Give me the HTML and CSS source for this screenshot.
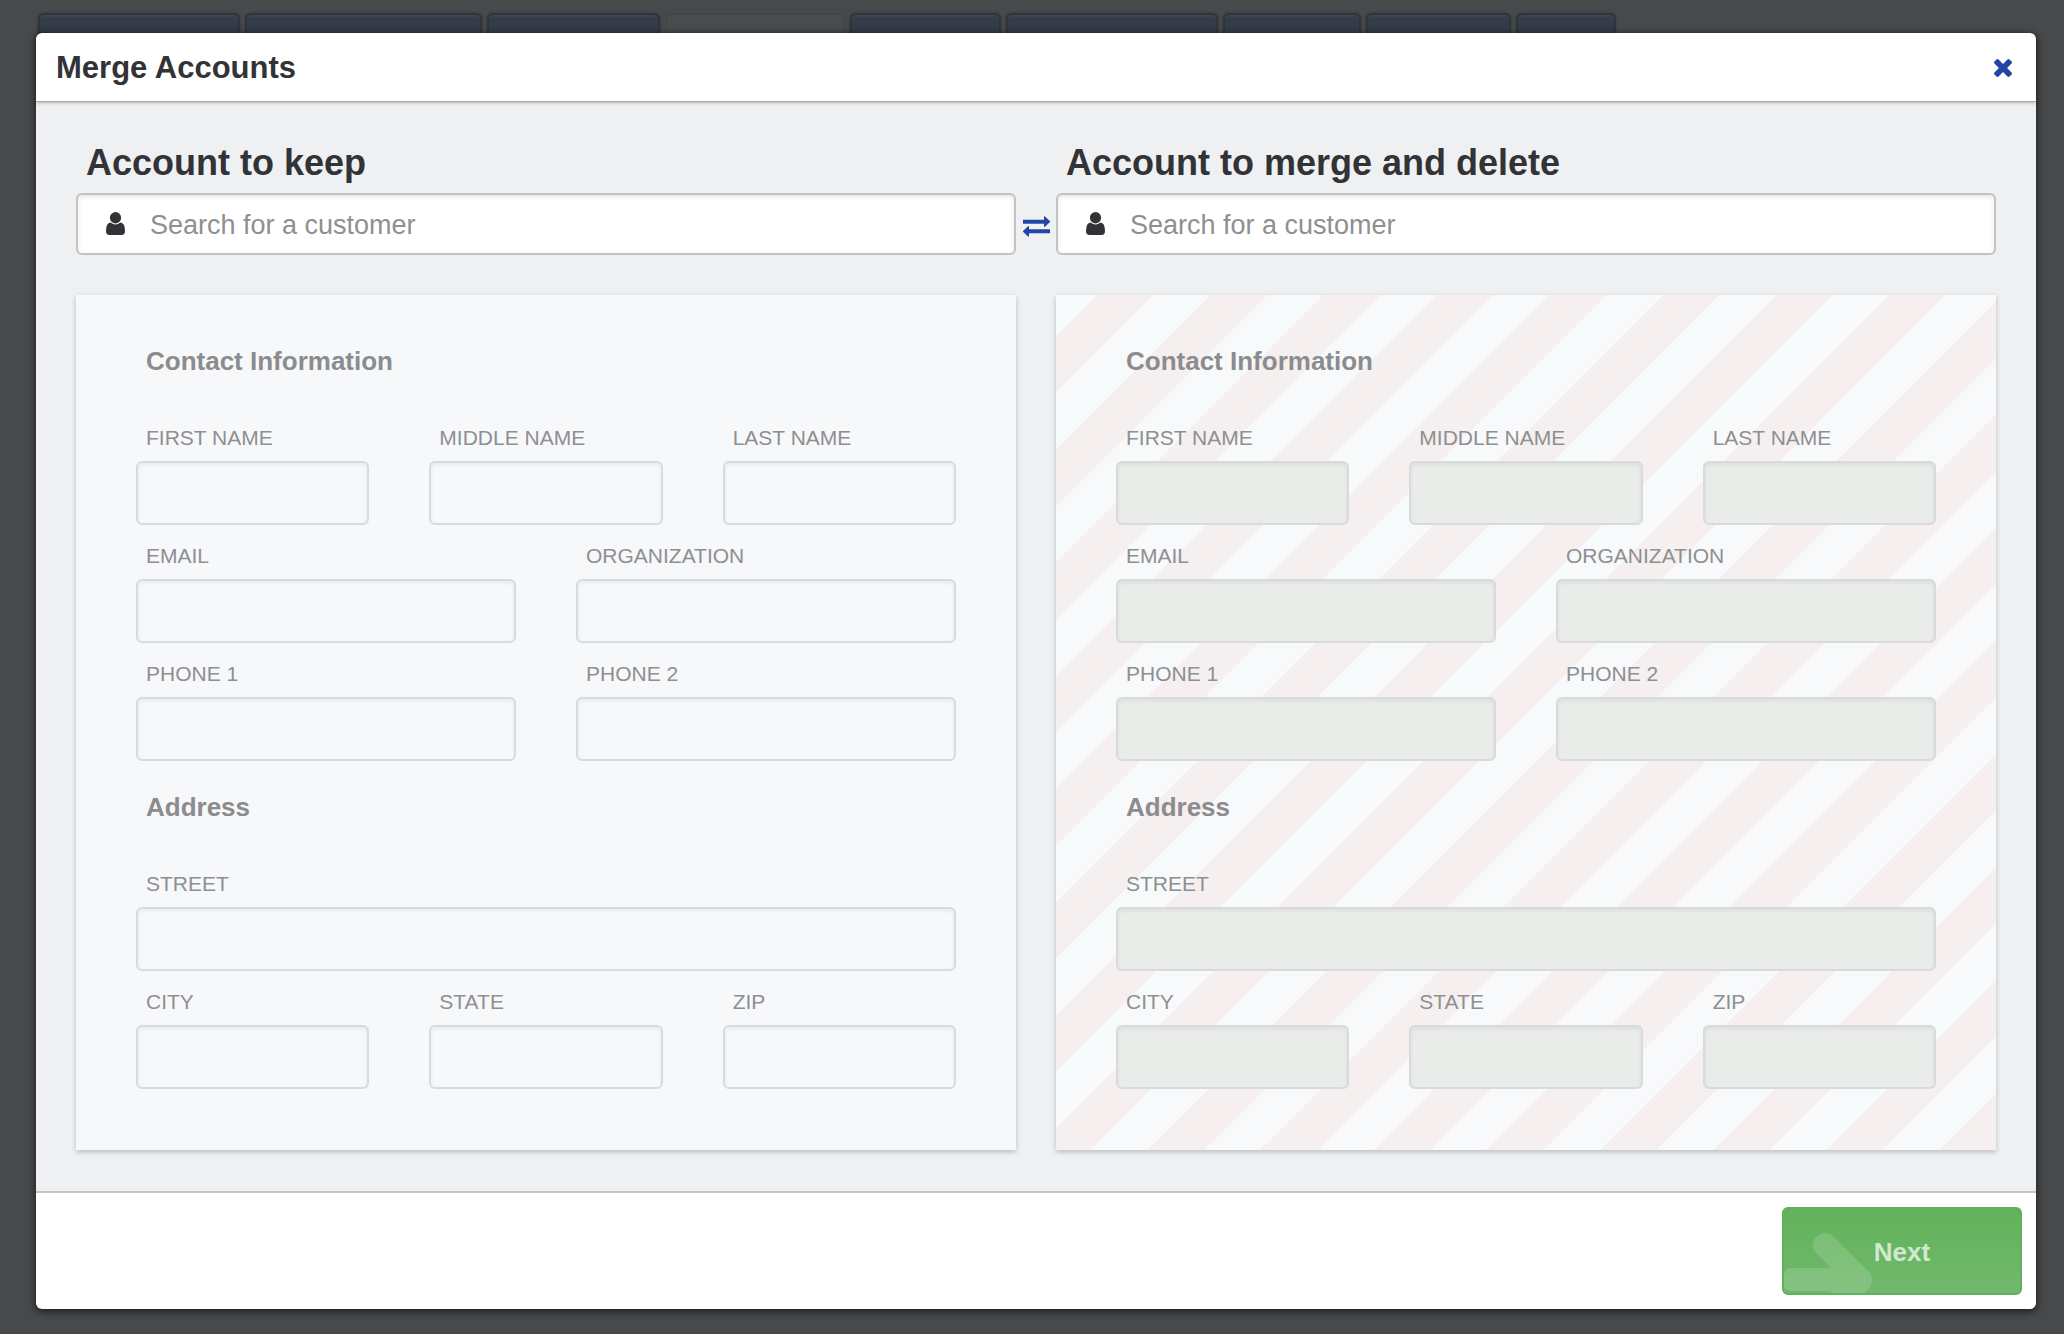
FILE: index.html
```html
<!DOCTYPE html>
<html lang="en">
<head>
<meta charset="utf-8">
<meta name="viewport" content="width=device-width, initial-scale=1">
<title>Merge Accounts</title>
<link rel="stylesheet" href="styles.css">
</head>
<body>
<div class="page-tabs" aria-hidden="true">
  <span class="page-tab"></span>
  <span class="page-tab"></span>
  <span class="page-tab"></span>
  <span class="page-tab page-tab-active"></span>
  <span class="page-tab"></span>
  <span class="page-tab"></span>
  <span class="page-tab"></span>
  <span class="page-tab"></span>
  <span class="page-tab"></span>
</div>

<div class="overlay">
  <div class="dialog" role="dialog" aria-modal="true" aria-labelledby="dialog-title">
    <header class="dialog-header">
      <h1 class="dialog-title" id="dialog-title">Merge Accounts</h1>
      <button class="icon-button" type="button" aria-label="Close">
        <svg width="18" height="18" viewBox="302 366 1188 1188" fill="currentColor"><path d="M1490 1322q0 40-28 68l-136 136q-28 28-68 28t-68-28l-294-294-294 294q-28 28-68 28t-68-28l-136-136q-28-28-28-68t28-68l294-294-294-294q-28-28-28-68t28-68l136-136q28-28 68-28t68 28l294 294 294-294q28-28 68-28t68 28l136 136q28 28 28 68t-28 68l-294 294 294 294q28 28 28 68z"/></svg>
      </button>
    </header>

    <form class="dialog-body" id="merge-form">
      <section class="account">
        <h2 class="account-title"><label for="keep-search">Account to keep</label></h2>
        <div class="search">
          <svg width="19" height="25" viewBox="0 0 19 25" fill="currentColor"><ellipse cx="9.5" cy="5.7" rx="5.6" ry="5.7"/><path d="M4.6 10.6Q9.5 14.6 14.4 10.6Q19 11 19 19Q19 23 15.5 23H3.5Q0 23 0 19Q0 11 4.6 10.6Z"/></svg>
          <input class="search-input" id="keep-search" type="text" placeholder="Search for a customer">
        </div>
        <div class="card">
          <h3 class="card-heading">Contact Information</h3>
          <div class="row">
            <div class="field"><label for="keep-first">FIRST NAME</label><input id="keep-first" type="text"></div>
            <div class="field"><label for="keep-middle">MIDDLE NAME</label><input id="keep-middle" type="text"></div>
            <div class="field"><label for="keep-last">LAST NAME</label><input id="keep-last" type="text"></div>
          </div>
          <div class="row">
            <div class="field"><label for="keep-email">EMAIL</label><input id="keep-email" type="text"></div>
            <div class="field"><label for="keep-org">ORGANIZATION</label><input id="keep-org" type="text"></div>
          </div>
          <div class="row">
            <div class="field"><label for="keep-phone1">PHONE 1</label><input id="keep-phone1" type="text"></div>
            <div class="field"><label for="keep-phone2">PHONE 2</label><input id="keep-phone2" type="text"></div>
          </div>
          <h3 class="card-heading">Address</h3>
          <div class="row">
            <div class="field"><label for="keep-street">STREET</label><input id="keep-street" type="text"></div>
          </div>
          <div class="row">
            <div class="field"><label for="keep-city">CITY</label><input id="keep-city" type="text"></div>
            <div class="field"><label for="keep-state">STATE</label><input id="keep-state" type="text"></div>
            <div class="field"><label for="keep-zip">ZIP</label><input id="keep-zip" type="text"></div>
          </div>
        </div>
      </section>

      <button class="icon-button swap-button" type="button" aria-label="Swap accounts">
        <svg width="27" height="21" viewBox="0 0 27 21" fill="currentColor"><path d="M0 3.7H21V0.8Q21.2 0 22 0.5L27 5.2V6L22 10.7Q21.2 11.2 21 10.4V7.8H0ZM27 13.2H6V10.6Q5.8 9.8 5 10.3L0 15V15.8L5 20.5Q5.8 21 6 20.2V17.3H27Z"/></svg>
      </button>

      <section class="account">
        <h2 class="account-title"><label for="delete-search">Account to merge and delete</label></h2>
        <div class="search">
          <svg width="19" height="25" viewBox="0 0 19 25" fill="currentColor"><ellipse cx="9.5" cy="5.7" rx="5.6" ry="5.7"/><path d="M4.6 10.6Q9.5 14.6 14.4 10.6Q19 11 19 19Q19 23 15.5 23H3.5Q0 23 0 19Q0 11 4.6 10.6Z"/></svg>
          <input class="search-input" id="delete-search" type="text" placeholder="Search for a customer">
        </div>
        <div class="card card-delete">
          <h3 class="card-heading">Contact Information</h3>
          <div class="row">
            <div class="field"><label for="delete-first">FIRST NAME</label><input id="delete-first" type="text" disabled></div>
            <div class="field"><label for="delete-middle">MIDDLE NAME</label><input id="delete-middle" type="text" disabled></div>
            <div class="field"><label for="delete-last">LAST NAME</label><input id="delete-last" type="text" disabled></div>
          </div>
          <div class="row">
            <div class="field"><label for="delete-email">EMAIL</label><input id="delete-email" type="text" disabled></div>
            <div class="field"><label for="delete-org">ORGANIZATION</label><input id="delete-org" type="text" disabled></div>
          </div>
          <div class="row">
            <div class="field"><label for="delete-phone1">PHONE 1</label><input id="delete-phone1" type="text" disabled></div>
            <div class="field"><label for="delete-phone2">PHONE 2</label><input id="delete-phone2" type="text" disabled></div>
          </div>
          <h3 class="card-heading">Address</h3>
          <div class="row">
            <div class="field"><label for="delete-street">STREET</label><input id="delete-street" type="text" disabled></div>
          </div>
          <div class="row">
            <div class="field"><label for="delete-city">CITY</label><input id="delete-city" type="text" disabled></div>
            <div class="field"><label for="delete-state">STATE</label><input id="delete-state" type="text" disabled></div>
            <div class="field"><label for="delete-zip">ZIP</label><input id="delete-zip" type="text" disabled></div>
          </div>
        </div>
      </section>
    </form>

    <footer class="dialog-footer">
      <button class="next-button" type="submit" form="merge-form">
        <svg class="next-arrow" width="90" height="84" viewBox="0 0 90 84" aria-hidden="true"><g opacity="0.14"><path d="M41 36L76 71L41 106" fill="none" stroke="#fff" stroke-width="24" stroke-linecap="round" stroke-linejoin="round"/><rect x="0" y="59" width="72" height="23" rx="7" fill="#fff"/></g></svg>
        Next
      </button>
    </footer>
  </div>
</div>
</body>
</html>
```
FILE: styles.css
```css
* {
  box-sizing: border-box;
}

body {
  margin: 0;
  min-height: 100vh;
  background: #48494b;
  color: #323336;
  font-family: "Liberation Sans", Arial, Helvetica, sans-serif;
}

h1,
h2,
h3 {
  margin: 0;
  font-weight: bold;
}

button,
input {
  font-family: inherit;
}

svg {
  display: block;
  flex: none;
}

/* Tab strip of the page behind the dialog */
.page-tabs {
  display: grid;
  grid-template-columns: 202px 237px 173px 180px 151px 212px 138px 145px 100px;
  gap: 5px;
  padding: 13px 0 0 38px;
}

.page-tab {
  height: 50px;
  border: 2px solid #30343b;
  border-radius: 6px 6px 0 0;
  background: #343b49;
  box-shadow: 0 0 3px rgba(0, 0, 0, 0.3), inset 0 2px 1px rgba(255, 255, 255, 0.05);
}

.page-tab-active {
  border-color: #444547;
  background: #4a4b4d;
  box-shadow: none;
}

.overlay {
  position: absolute;
  inset: 0;
  display: flex;
  padding: 33px 28px 25px 36px;
}

.dialog {
  display: flex;
  flex: 1;
  flex-direction: column;
  min-width: 0;
  border-radius: 6px;
  background: #fff;
  box-shadow: 0 2px 8px rgba(0, 0, 0, 0.7);
}

.dialog-header {
  display: flex;
  align-items: center;
  justify-content: space-between;
  padding: 17px 24px 15px 20px;
  border-bottom: 1px solid #a9aaac;
  box-shadow: 0 1px 3px rgba(0, 0, 0, 0.25);
  z-index: 1;
}

.dialog-title {
  font-size: 31px;
  line-height: 36px;
}

.icon-button {
  display: flex;
  align-items: center;
  justify-content: center;
  padding: 0;
  border: 0;
  background: none;
  color: #2445a8;
  cursor: pointer;
}

.dialog-body {
  display: grid;
  flex: 1;
  grid-template-columns: minmax(0, 1fr) 40px minmax(0, 1fr);
  align-items: start;
  padding: 41px 40px;
  background: #eff0f2;
}

.account-title {
  padding-left: 10px;
  font-size: 36px;
  line-height: 40px;
}

.search {
  display: flex;
  align-items: center;
  gap: 25px;
  height: 62px;
  margin: 10px 0 40px;
  padding-left: 28px;
  border: 2px solid #c3c3c3;
  border-radius: 6px;
  background: #fff;
  box-shadow: inset 0 2px 4px rgba(0, 0, 0, 0.1);
}

.search-input {
  flex: 1;
  min-width: 0;
  height: 100%;
  padding: 2px 0 0;
  border: 0;
  outline: 0;
  background: none;
  color: #323336;
  font-size: 27px;
}

.search-input::placeholder {
  color: #8f8f8f;
  opacity: 1;
}

.swap-button {
  height: 62px;
  margin-top: 52px;
}

.card {
  padding: 20px 60px 61px;
  background: #f7f8fa;
  box-shadow: 0 2px 5px rgba(0, 0, 0, 0.22);
}

.card-delete {
  background: repeating-linear-gradient(-45deg, #f5efef 0 40px, #f7f9fa 40px 80px);
}

.card-heading {
  padding: 31px 10px;
  color: #8b8c8e;
  font-size: 26px;
  line-height: 30px;
}

.row {
  display: flex;
  gap: 60px;
}

.field {
  display: flex;
  flex: 1;
  flex-direction: column;
  min-width: 0;
}

.field label {
  padding: 19px 10px 11px;
  color: #8e8f91;
  font-size: 21px;
  line-height: 24px;
}

.field input {
  width: 100%;
  height: 64px;
  padding: 0 14px;
  border: 2px solid #d9dadc;
  border-radius: 6px;
  background: #f7f8fa;
  box-shadow: inset 0 2px 4px rgba(0, 0, 0, 0.06);
  font-size: 27px;
}

.field input:disabled {
  background: #eaece9;
}

.dialog-footer {
  display: flex;
  justify-content: flex-end;
  padding: 14px;
  border-top: 2px solid #c3c4c6;
}

.next-button {
  position: relative;
  width: 240px;
  height: 88px;
  padding: 2px 0 0;
  overflow: hidden;
  border: 2px solid #5fb25c;
  border-radius: 6px;
  background: linear-gradient(#61b25a, #72b96d);
  color: #d0e9cf;
  font-size: 26px;
  font-weight: bold;
  cursor: pointer;
}

.next-arrow {
  position: absolute;
  left: 0;
  bottom: 0;
}
```
